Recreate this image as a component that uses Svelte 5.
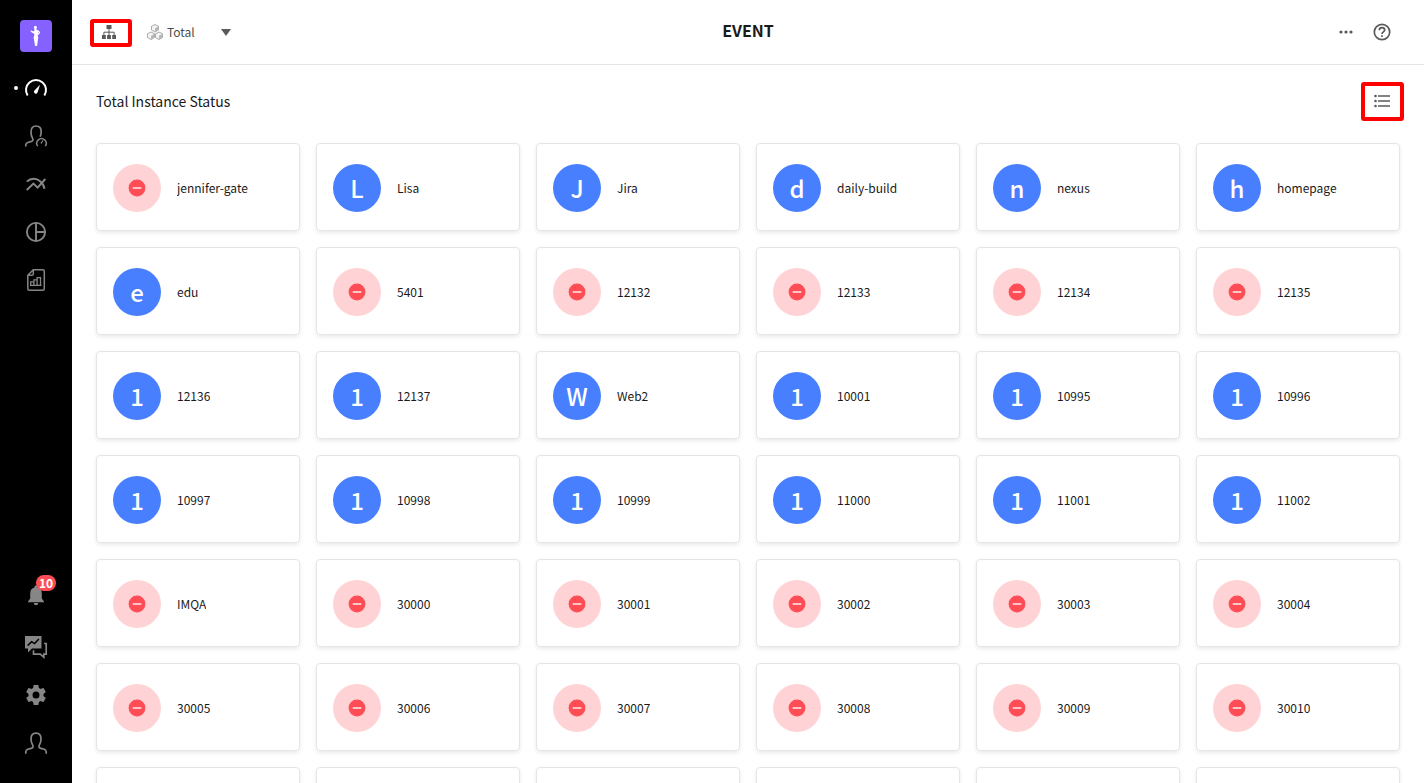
<script lang="ts">
    const menu = [
        { id: 'dashboard', label: 'Dashboard' },
        { id: 'user', label: 'Real user' },
        { id: 'trend', label: 'Analysis' },
        { id: 'stats', label: 'Statistics' },
        { id: 'report', label: 'Report' }
    ]

    const inactive = (names: string[]) => names.map((name) => ({ name, active: false }))
    const active = (names: string[]) => names.map((name) => ({ name, active: true }))

    const instances = [
        ...inactive(['jennifer-gate']),
        ...active(['Lisa', 'Jira', 'daily-build', 'nexus', 'homepage', 'edu']),
        ...inactive(['5401', '12132', '12133', '12134', '12135']),
        ...active(['12136', '12137', 'Web2', '10001', '10995', '10996']),
        ...active(['10997', '10998', '10999', '11000', '11001', '11002']),
        ...inactive(['IMQA', '30000', '30001', '30002', '30003', '30004']),
        ...inactive(['30005', '30006', '30007', '30008', '30009', '30010'])
    ]

    const pending = 6

    let current = $state('dashboard')
    let domain = $state('Total')
    let alerts = $state(10)
</script>

{#snippet cube()}
    <path d="M4 0.5 7.5 2.3V6L4 8 0.5 6V2.3Z" fill="#f4f4f4" stroke="#969696" stroke-width="0.8" />
    <path d="M4 4.2 7.3 2.4V6L4 7.8Z" fill="#b8b8b8" />
{/snippet}

<div class="app">
    <aside class="sidebar">
        <a class="logo" href="#home" aria-label="Home">
            <svg width="32" height="32" viewBox="0 0 32 32" fill="#fff">
                <ellipse cx="15.4" cy="7.6" rx="1.5" ry="1.8" />
                <path d="M14.5 9h2l.2 1 2 .6 1.600 1.900-1.700 2.200-1 .3.7 2.500-.6 3.800-.6 4.700H15l-.7-4.700-.7-3.500.8-3.100-.6-1.300-2-1-1.500-1.500 1.200-.3 1.800.9 1.100-.9Zm3.600 2.800-.2 1.700.9-.9Z" />
            </svg>
        </a>

        <nav class="menu">
            {#each menu as item}
                <button
                    class="menu-item"
                    class:selected={current === item.id}
                    aria-label={item.label}
                    onclick={() => (current = item.id)}
                >
                    <svg width="24" height="24" viewBox="0 0 24 24" fill="none" stroke="currentColor" stroke-width="1.7">
                        {#if item.id === 'dashboard'}
                            <path d="M3.600 19.500A10 10 0 1 1 20.400 19.500" stroke-width="2" />
                            <path d="m16 8.800-2.300 7.200a1.900 1.900 0 1 1-3.200-1.600Z" fill="currentColor" stroke="none" />
                        {:else if item.id === 'user'}
                            <path d="M1.800 22.500v-1.600c0-1.400.8-2 2-2.400l3.700-1.100c1.500-.5 1.700-1.800 1.100-3-1-1.700-1.600-3.800-1.600-6C7 4.100 8.900 2 12 2s5.200 2 5.200 5.600c0 2-.4 3.700-1 5.200" />
                            <path d="M13.700 22.100a4.700 4.700 0 1 1 7.600 0" stroke-width="1.500" />
                            <path d="m17 19.500 1.800-3" stroke-width="1.300" />
                        {:else if item.id === 'trend'}
                            <path d="m2.800 18 6.600-6.400 4.200 4L21.300 7" stroke-width="2" />
                            <path d="M2.800 9.600c4.200-4 9.700-3.600 13.300-.4 2.600 2.200 4 4.800 4.400 7.600" stroke-width="2" />
                        {:else if item.id === 'stats'}
                            <circle cx="12" cy="12" r="9.100" stroke-width="1.900" />
                            <path d="M12 3v18M12 12h9" stroke-width="1.900" />
                        {:else}
                            <path d="M9.300 1.800h9.500c1 0 1.500.500 1.500 1.500v17.400c0 1-.500 1.500-1.500 1.500H5.300c-1 0-1.500-.500-1.500-1.500V7.300ZM9.300 1.800v4.100c0 1-.500 1.400-1.400 1.400H3.800" stroke-width="1.500" />
                            <path d="M6.700 17.300v-3.500h3.200v3.500M9.900 17.300v-5.500h3.200v5.500M13.100 17.300V9.700h3.400v7.600M6 17.300h11.500" stroke-width="1.300" />
                        {/if}
                    </svg>
                </button>
            {/each}
        </nav>

        <div class="tools">
            <button class="menu-item bell" aria-label="Notifications">
                <svg width="24" height="24" viewBox="0 0 24 24" fill="currentColor">
                    <path d="M12 2.500c.9 0 1.500.6 1.500 1.400v.6c2.900.7 4.300 3 4.300 5.900v5.200l2.200 3v.6H4v-.6l2.200-3v-5.200c0-2.900 1.400-5.200 4.300-5.900v-.6c0-.8.6-1.400 1.500-1.400ZM9.800 20h4.400a2.200 2.200 0 0 1-4.400 0Z" />
                </svg>
                <span class="badge">{alerts}</span>
            </button>
            <button class="menu-item" aria-label="Messages">
                <svg width="24" height="24" viewBox="0 0 24 24">
                    <path d="M1 1h16.500v12.500H8L4 17.500v-4H1Z" fill="currentColor" />
                    <path d="m3.600 10.600 4-4 3 2 4.300-4.600" fill="none" stroke="#000" stroke-width="1.500" />
                    <path d="M20 8.500h2.200v10.700h-2.400v3l-3.600-3H9.500v-4" fill="none" stroke="currentColor" stroke-width="1.700" />
                </svg>
            </button>
            <button class="menu-item" aria-label="Settings">
                <svg width="24" height="24" viewBox="0 0 24 24" fill="currentColor">
                    <path d="M19.430 12.980c.04-.32.070-.64.070-.98s-.030-.66-.070-.98l2.110-1.650c.19-.15.240-.42.120-.64l-2-3.460c-.12-.22-.39-.3-.61-.22l-2.490 1c-.52-.4-1.080-.73-1.690-.98l-.38-2.650A.488.488 0 0 0 14 2h-4c-.25 0-.46.180-.49.420l-.38 2.650c-.61.250-1.170.590-1.690.980l-2.490-1c-.23-.09-.49 0-.61.220l-2 3.460c-.13.220-.07.490.120.640l2.110 1.650c-.04.320-.07.650-.07.980s.030.660.070.980l-2.110 1.650c-.19.150-.24.420-.12.640l2 3.460c.120.220.390.300.610.220l2.490-1c.520.400 1.080.730 1.690.980l.380 2.650c.030.240.240.420.490.420h4c.250 0 .460-.180.490-.420l.380-2.650c.610-.250 1.170-.590 1.690-.980l2.490 1c.230.090.490 0 .610-.220l2-3.460c.120-.220.070-.490-.12-.640l-2.110-1.650ZM12 15.500a3.500 3.500 0 1 1 0-7 3.500 3.500 0 0 1 0 7Z" />
                </svg>
            </button>
            <button class="menu-item" aria-label="My account">
                <svg width="24" height="24" viewBox="0 0 24 24" fill="none" stroke="currentColor" stroke-width="1.700">
                    <path d="M1.800 22.700v-2c0-1.300.8-2 2-2.400l4-1.200c1.300-.5 1.600-1.700.9-2.900C7.600 12.300 7 10.100 7 7.900 7 4.300 8.900 2.200 12 2.200s5 2.100 5 5.700c0 2.400-.6 4.400-1.700 6.300-.7 1.200-.4 2.400.9 2.900l4 1.200c1.200.4 2 1.100 2 2.400v2" />
                </svg>
            </button>
        </div>
    </aside>

    <div class="page">
        <header class="header">
            <div class="header-left">
                <button class="outlined tree" aria-label="Domain tree">
                    <svg width="14" height="14" viewBox="0 0 14 14" fill="#5a5a5a">
                        <path d="M4.500 0h5v4h-5ZM0 10h3.800v4H0ZM5.100 10h3.800v4H5.100ZM10.200 10H14v4h-3.800Z" />
                        <path d="M7 4v6M1.900 10V7.200h10.200V10" fill="none" stroke="#5a5a5a" />
                    </svg>
                </button>
                <label class="domain">
                    <svg width="16" height="16" viewBox="0 0 16 16" aria-hidden="true">
                        <g transform="translate(4 0)">{@render cube()}</g>
                        <g transform="translate(0 7.500)">{@render cube()}</g>
                        <g transform="translate(8 7.500)">{@render cube()}</g>
                    </svg>
                    <select bind:value={domain} aria-label="Domain">
                        <option>Total</option>
                    </select>
                    <span class="caret"></span>
                </label>
            </div>
            <h1>EVENT</h1>
            <div class="header-right">
                <button class="icon-button" aria-label="More">
                    <svg width="14" height="4" viewBox="0 0 14 4" fill="#5a5a5a">
                        <circle cx="2" cy="2" r="1.600" />
                        <circle cx="7" cy="2" r="1.600" />
                        <circle cx="12" cy="2" r="1.600" />
                    </svg>
                </button>
                <button class="icon-button" aria-label="Help">
                    <svg width="18" height="18" viewBox="0 0 18 18" fill="none" stroke="#5a5a5a" stroke-width="1.700">
                        <circle cx="9" cy="9" r="7.700" />
                        <path d="M6.300 7.200C6.300 5.600 7.400 4.600 9 4.600s2.700 1 2.700 2.400c0 1.900-2.700 2-2.700 4M9 12.200V13.900" />
                    </svg>
                </button>
            </div>
        </header>

        <main class="content">
            <div class="title-row">
                <h2>Total Instance Status</h2>
                <button class="outlined list" aria-label="List view">
                    <svg width="16" height="14" viewBox="0 0 16 14" fill="#5a5a5a">
                        <path d="M4 1.200h12v1.600H4ZM4 6.200h12v1.600H4ZM4 11.200h12v1.600H4Z" />
                        <circle cx="1.500" cy="2" r="1.300" />
                        <circle cx="1.500" cy="7" r="1.300" />
                        <circle cx="1.500" cy="12" r="1.300" />
                    </svg>
                </button>
            </div>

            <ul class="cards">
                {#each instances as instance}
                    <li class="card">
                        <span class="avatar" class:active={instance.active}>
                            {#if instance.active}
                                {instance.name[0]}
                            {:else}
                                <svg width="18" height="18" viewBox="0 0 18 18">
                                    <circle cx="9" cy="9" r="8.400" fill="#ff4d55" />
                                    <path d="M4.700 9h8.600" stroke="#ffd2d5" stroke-width="1.800" />
                                </svg>
                            {/if}
                        </span>
                        <span class="name">{instance.name}</span>
                    </li>
                {/each}
                {#each { length: pending } as _}
                    <li class="card" aria-busy="true">
                        <span class="avatar"></span>
                    </li>
                {/each}
            </ul>
        </main>
    </div>
</div>

<style>
    :global(body) {
        margin: 0;
    }

    .app {
        display: flex;
        height: 100vh;
        overflow: hidden;
        background-color: #fff;
        color: #1a1a1a;
        font-family: "Noto Sans CJK KR", "Noto Sans", sans-serif;
        font-size: 12px;
    }

    button {
        display: flex;
        align-items: center;
        justify-content: center;
        box-sizing: border-box;
        padding: 0;
        border: none;
        background: none;
        font-family: inherit;
        cursor: pointer;
    }

    .sidebar {
        display: flex;
        flex-direction: column;
        align-items: center;
        flex-shrink: 0;
        box-sizing: border-box;
        width: 72px;
        padding: 20px 0 16px;
        background-color: #000;
    }

    .logo {
        display: flex;
        margin-bottom: 12px;
        border-radius: 4px;
        background-color: #8561ff;
    }

    .menu-item {
        position: relative;
        width: 72px;
        height: 48px;
        color: #868686;
    }

    .menu-item.selected {
        color: #fff;
    }

    .menu-item.selected::before {
        content: "";
        position: absolute;
        left: 14px;
        width: 4px;
        height: 4px;
        border-radius: 50%;
        background-color: #fff;
    }

    .tools {
        margin-top: auto;
    }

    .bell {
        height: 56px;
    }

    .badge {
        position: absolute;
        top: 8px;
        left: 36px;
        width: 20px;
        border-radius: 8px;
        background-color: #ff4d55;
        color: #fff;
        font-size: 12px;
        font-weight: 700;
        line-height: 16px;
        text-align: center;
    }

    .page {
        display: flex;
        flex: 1;
        flex-direction: column;
        min-width: 0;
    }

    .header {
        display: grid;
        grid-template-columns: 1fr auto 1fr;
        align-items: center;
        flex-shrink: 0;
        height: 64px;
        padding: 0 24px;
        border-bottom: 1px solid #e5e5e5;
    }

    .header-left,
    .header-right {
        display: flex;
        align-items: center;
    }

    .header-right {
        justify-content: flex-end;
    }

    h1 {
        margin: 0;
        padding-bottom: 4px;
        font-size: 16px;
        font-weight: 700;
        line-height: 24px;
    }

    .outlined {
        border: 4px solid #f00;
        border-radius: 3px;
    }

    .tree {
        width: 42px;
        height: 28px;
        margin: 2px 15px 0 -6px;
        padding: 0 4px 2px 0;
    }

    .domain {
        display: flex;
        align-items: center;
        gap: 4px;
    }

    select {
        appearance: none;
        width: 50px;
        padding: 0;
        border: none;
        background: none;
        color: #4d4d4d;
        font-family: inherit;
        font-size: 12px;
        line-height: 18px;
    }

    .caret {
        border-top: 7px solid #5a5a5a;
        border-right: 5px solid transparent;
        border-left: 5px solid transparent;
        pointer-events: none;
    }

    .icon-button {
        width: 36px;
        height: 36px;
    }

    .content {
        flex: 1;
        min-height: 0;
        padding: 17px 24px 0;
        overflow-y: auto;
        scrollbar-width: none;
    }

    .title-row {
        display: flex;
        align-items: center;
        justify-content: space-between;
        margin-bottom: 22px;
    }

    h2 {
        margin: 0;
        padding-bottom: 2px;
        font-size: 14px;
        font-weight: 400;
        line-height: 20px;
    }

    .list {
        width: 43px;
        height: 39px;
        margin-right: -4px;
        padding: 0 1px 1px 0;
    }

    .cards {
        display: grid;
        grid-template-columns: repeat(auto-fill, minmax(200px, 1fr));
        gap: 16px;
        margin: 0;
        padding: 0 0 24px;
        list-style: none;
    }

    .card {
        display: flex;
        align-items: center;
        gap: 16px;
        padding: 20px 16px 18px;
        border: 1px solid #e5e5e5;
        border-radius: 4px;
        box-shadow: 0 2px 4px rgba(0, 0, 0, 0.08);
    }

    .avatar {
        display: flex;
        align-items: center;
        justify-content: center;
        flex-shrink: 0;
        width: 48px;
        height: 48px;
        border-radius: 50%;
        background-color: #ffd2d5;
        color: #fff;
        font-size: 24px;
        font-weight: 500;
        line-height: 48px;
    }

    .avatar.active {
        background-color: #487fff;
    }

    .name {
        overflow: hidden;
        line-height: 18px;
        text-overflow: ellipsis;
        white-space: nowrap;
    }
</style>
